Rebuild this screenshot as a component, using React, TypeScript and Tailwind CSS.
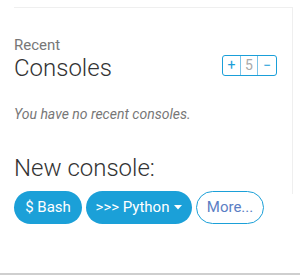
export default function App() {
  return (
    <div className="w-[300px] h-[276px] bg-white flex flex-col font-['Roboto',sans-serif]">
      <div className="flex-1 pl-[14px] pt-[7px]">
        <div className="border-t border-r border-[#efefef] w-[279px] h-[187px] pt-[29px] pr-[15px]">
          {/* Recent consoles header */}
          <div className="text-[15px] leading-[16px] text-[#777]">Recent</div>
          <div className="flex items-center justify-between mt-[1px]">
            <h2 className="text-[24px] leading-[28px] font-light text-[#333]">Consoles</h2>
            <div className="flex h-[21px] border border-[#1a9fd9] rounded-[3px] text-[14px] -mt-[5px]">
              <span className="w-[17px] flex items-center justify-center text-[#1a9fd9]">+</span>
              <span className="w-[18px] flex items-center justify-center text-[#aaa] border-l border-r border-[#7cc4e8]">5</span>
              <span className="w-[18px] flex items-center justify-center text-[#1a9fd9]">−</span>
            </div>
          </div>
          <p className="mt-[22px] text-[14px] leading-[21px] italic text-[#777]">You have no recent consoles.</p>
          <h2 className="mt-[29px] text-[24px] leading-[28px] font-light text-[#333]">New console:</h2>
        </div>
        {/* buttons */}
        <div className="flex gap-[4px] -mt-[3px]">
          <button className="h-[33px] w-[68px] rounded-full bg-[#1ba0d8] text-white text-[15px]">$ Bash</button>
          <button className="h-[33px] w-[106px] rounded-full bg-[#1ba0d8] text-white text-[15px] flex items-center justify-center gap-[5px]">
            &gt;&gt;&gt; Python
            <svg width="8" height="5" viewBox="0 0 8 5"><path d="M0 0h8L4 4.5z" fill="white" /></svg>
          </button>
          <button className="h-[33px] w-[68px] rounded-full border border-[#1ba0d8] text-[#5b7ec4] text-[15px]">More...</button>
        </div>
      </div>
      <div className="h-[2px] bg-[#cfcfcf] mb-[1px]" />
    </div>
  );
}
